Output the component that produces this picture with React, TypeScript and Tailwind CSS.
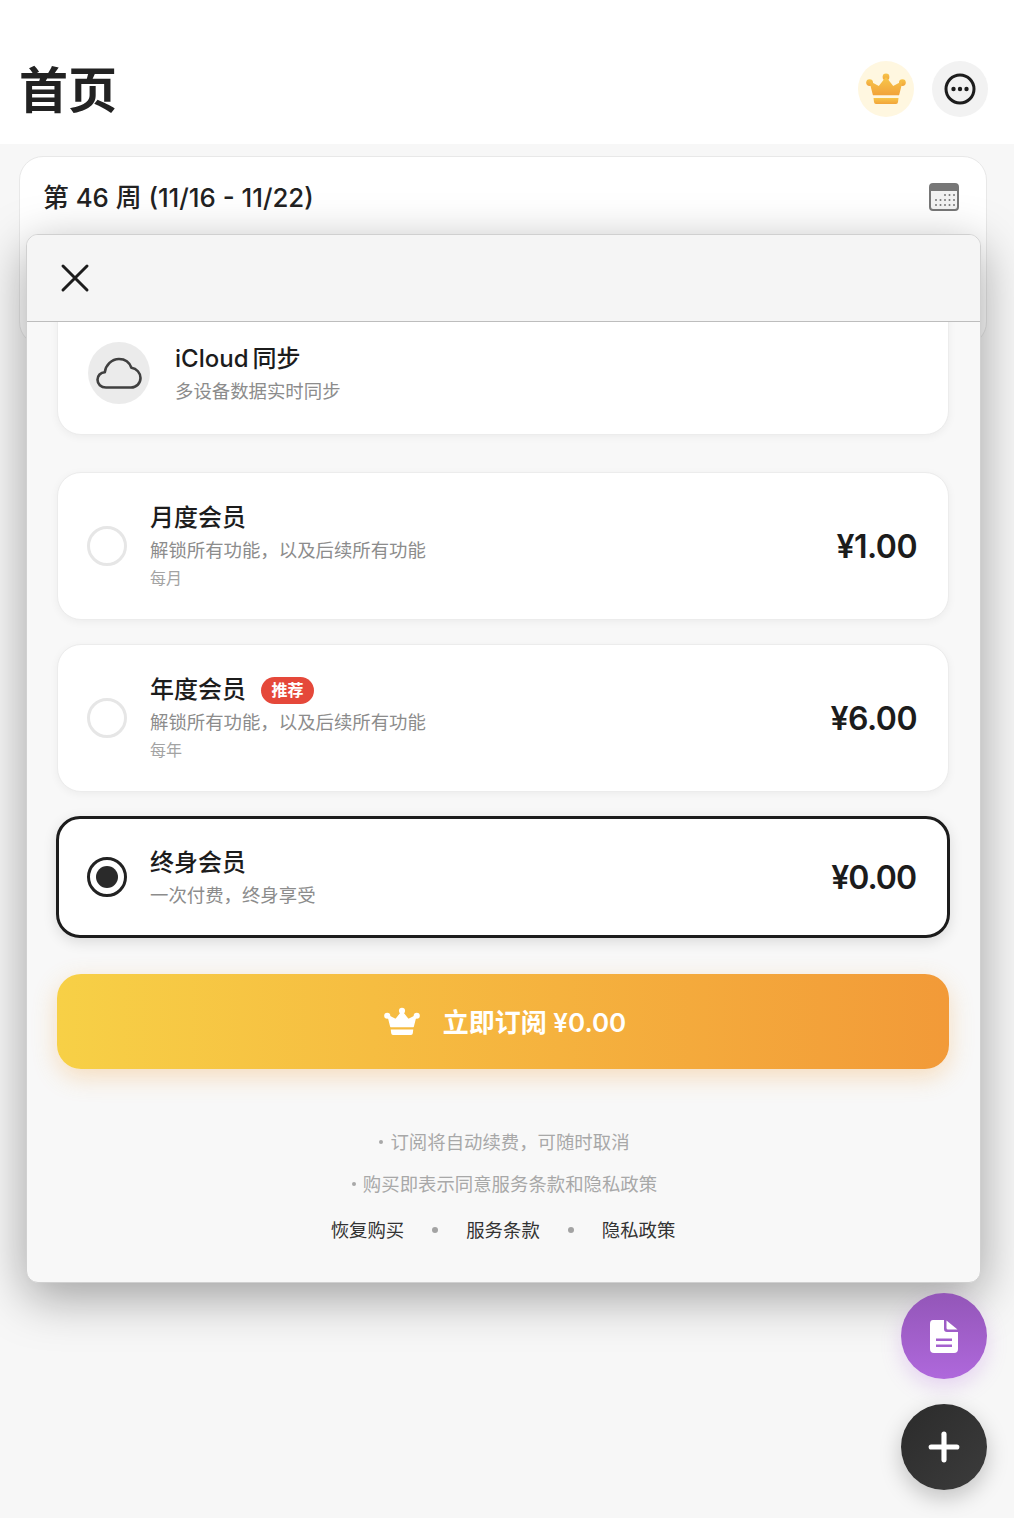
import { Plus } from 'lucide-react';

const font = { fontFamily: 'Inter, "Noto Sans CJK SC", sans-serif' };

function Crown({ className, id, from, to }: { className: string; id: string; from: string; to: string }) {
  return (
    <svg viewBox="0 0 40 32" className={className}>
      <defs>
        <linearGradient id={id} x1="0" y1="0" x2="0" y2="1">
          <stop offset="0" stopColor={from} />
          <stop offset="1" stopColor={to} />
        </linearGradient>
      </defs>
      <circle cx="20" cy="4" r="3.4" fill={`url(#${id})`} />
      <circle cx="3.6" cy="9.6" r="3.4" fill={`url(#${id})`} />
      <circle cx="36.4" cy="9.6" r="3.4" fill={`url(#${id})`} />
      <path d="M20 5 L27 14 L35.5 9.5 L32.5 21.5 H7.5 L4.5 9.5 L13 14 Z" fill={`url(#${id})`} stroke={`url(#${id})`} strokeWidth="1.5" strokeLinejoin="round" />
      <path d="M7.5 25 H32.5 L32 29 Q31.8 31 30 31 H10 Q8.2 31 8 29 Z" fill={`url(#${id})`} />
    </svg>
  );
}

function Radio({ checked }: { checked?: boolean }) {
  if (checked) {
    return (
      <div className="w-10 h-10 shrink-0 rounded-full border-[3px] border-[#222] flex items-center justify-center">
        <div className="w-[22px] h-[22px] rounded-full bg-[#2a2a2a]" />
      </div>
    );
  }
  return <div className="w-10 h-10 shrink-0 rounded-full border-[3px] border-[#e6e6e6]" />;
}

type Plan = { name: string; desc: string; period?: string; price: string; badge?: boolean; selected?: boolean };

const plans: Plan[] = [
  { name: '月度会员', desc: '解锁所有功能，以及后续所有功能', period: '每月', price: '¥1.00' },
  { name: '年度会员', desc: '解锁所有功能，以及后续所有功能', period: '每年', price: '¥6.00', badge: true },
  { name: '终身会员', desc: '一次付费，终身享受', price: '¥0.00', selected: true },
];

function PlanCard({ plan }: { plan: Plan }) {
  return (
    <div
      className={`flex items-center pr-[31px] rounded-[24px] bg-white ${
        plan.selected
          ? 'h-[122px] -mx-px pl-[28px] border-[3px] border-[#1c1c1c] shadow-[0_4px_14px_rgba(0,0,0,0.12)]'
          : 'h-[148px] pl-[29px] border border-[#ececec] shadow-[0_2px_8px_rgba(0,0,0,0.05)]'
      }`}
    >
      <Radio checked={plan.selected} />
      <div className="flex-1 ml-[23px]">
        <div className="flex items-center h-[32px]">
          <span className="text-[24px] font-medium text-[#1c1c1c] leading-[32px]">{plan.name}</span>
          {plan.badge && (
            <span className="ml-[15px] w-[53px] h-[27px] rounded-full bg-[#e5483a] text-white text-[16px] font-bold leading-[27px] text-center">
              推荐
            </span>
          )}
        </div>
        <div className="text-[18.4px] text-[#8c8c8c] leading-[26px] mt-[3px]">{plan.desc}</div>
        {plan.period && <div className="text-[16px] text-[#a3a3a3] leading-[24px] mt-[3px]">{plan.period}</div>}
      </div>
      <div
        className={`text-[32px] font-semibold text-[#1c1c1c] pt-[2px] ${
          plan.selected ? 'tracking-[-1px]' : 'tracking-[-0.5px]'
        }`}
      >
        {plan.price}
      </div>
    </div>
  );
}

function Note({ text }: { text: string }) {
  return (
    <div className="flex items-center justify-center pl-[3px]">
      <span className="w-[4px] h-[4px] rounded-full bg-[#a8a8a8] mr-[7px]" />
      <span>{text}</span>
    </div>
  );
}

export default function App() {
  return (
    <div style={font} className="relative w-[1014px] h-[1518px] bg-[#f7f7f7] overflow-hidden">
      <header className="h-[144px] bg-white flex items-start justify-between pl-[19px] pr-[26px] pt-[61px]">
        <h1 className="text-[49px] font-bold text-[#222] leading-[60px]">首页</h1>
        <div className="flex gap-[18px]">
          <button className="w-14 h-14 rounded-full bg-[#fff7e0] flex items-center justify-center">
            <Crown id="crown-top" from="#f7c54a" to="#f2a43a" className="w-[40px] h-[32px]" />
          </button>
          <button className="w-14 h-14 rounded-full bg-[#f2f2f2] flex items-center justify-center">
            <svg viewBox="0 0 32 32" className="w-8 h-8">
              <circle cx="16" cy="16" r="14" fill="none" stroke="#1c1c1c" strokeWidth="3" />
              <circle cx="9.5" cy="16" r="2.2" fill="#1c1c1c" />
              <circle cx="16" cy="16" r="2.2" fill="#1c1c1c" />
              <circle cx="22.5" cy="16" r="2.2" fill="#1c1c1c" />
            </svg>
          </button>
        </div>
      </header>

      <section className="ml-[19px] mr-[27px] mt-[12px] h-[190px] rounded-[24px] bg-white border border-[#e8e8e8] flex items-start justify-between pl-[23px] pr-[27px] pt-[23px]">
        <div className="text-[25.8px] font-medium text-[#222] leading-[36px]">第 46 周 (11/16 - 11/22)</div>
        <svg viewBox="0 0 30 28" className="w-[30px] h-[28px] mt-[3px]">
          <rect x="1" y="1" width="28" height="26" rx="3" fill="#f2f2f2" stroke="#777" strokeWidth="2" />
          <path d="M1 8V4a3 3 0 0 1 3-3h22a3 3 0 0 1 3 3v4Z" fill="#777" />
          {[12, 17, 22].map((y) =>
            [7, 11.5, 16, 20.5, 25].map((x) =>
              y === 12 && x < 12 ? null : <circle key={`${x}-${y}`} cx={x} cy={y} r="1" fill="#777" />
            )
          )}
        </svg>
      </section>

      {/* subscription sheet */}
      <div className="absolute left-[26px] top-[234px] w-[955px] h-[1049px] rounded-[12px] bg-[#f8f8f8] border border-[#d0d0d0] overflow-hidden shadow-[0_14px_50px_rgba(0,0,0,0.36)]">
        <div className="h-[87px] bg-[#f5f5f5] border-b border-[#bdbdbd] flex items-center pl-[33px] relative z-10">
          <svg viewBox="0 0 30 30" className="w-[30px] h-[30px]">
            <path d="M3 3 L27 27 M27 3 L3 27" stroke="#1c1c1c" strokeWidth="3" strokeLinecap="round" />
          </svg>
        </div>

        <div className="pl-[30px] pr-[31px]">
          <div className="-mt-[12px] h-[125px] rounded-b-[24px] bg-white border border-[#ececec] shadow-[0_2px_8px_rgba(0,0,0,0.05)] flex items-center pl-[30px]">
            <div className="w-[62px] h-[62px] rounded-full bg-[#ebebeb] flex items-center justify-center">
              <svg viewBox="0 0 46 32" className="w-[46px] h-[32px]">
                <path
                  d="M10 30.5 C4.8 30.5 1.5 27 1.5 22.8 C1.5 18.6 4.6 15.4 8.8 15.2 C9.8 8 15.6 2 23 2 C29 2 33.6 5.6 35.4 10.8 C40.6 11.6 44.5 15.8 44.5 21 C44.5 26.4 40.4 30.5 35 30.5 Z"
                  fill="none"
                  stroke="#404040"
                  strokeWidth="2.6"
                  strokeLinejoin="round"
                />
              </svg>
            </div>
            <div className="ml-[25px]">
              <div className="text-[24px] font-medium text-[#1c1c1c] leading-[32px] pt-[1px]">
                iCloud<span className="ml-[4px]">同步</span>
              </div>
              <div className="text-[18.4px] text-[#8c8c8c] leading-[26px] mt-[3px]">多设备数据实时同步</div>
            </div>
          </div>

          <div className="mt-[37px] flex flex-col gap-[24px]">
            {plans.map((plan) => (
              <PlanCard key={plan.name} plan={plan} />
            ))}
          </div>

          <button className="mt-[36px] w-full h-[95px] pl-[4px] rounded-[24px] bg-gradient-to-r from-[#f7d046] to-[#f29a38] shadow-[0_8px_24px_rgba(242,160,56,0.3)] flex items-center justify-center gap-[23px] text-white">
            <Crown id="crown-btn" from="#ffffff" to="#ffffff" className="w-[36px] h-[29px]" />
            <span className="text-[26px] font-semibold pt-[2px]">立即订阅 ¥0.00</span>
          </button>

          <div className="mt-[60px] text-center text-[18.4px] text-[#a8a8a8] leading-[26px]">
            <Note text="订阅将自动续费，可随时取消" />
            <div className="mt-[16px]">
              <Note text="购买即表示同意服务条款和隐私政策" />
            </div>
          </div>

          <div className="mt-[20px] flex items-center justify-center gap-[28px] text-[18.4px] text-[#333] leading-[26px]">
            <span>恢复购买</span>
            <span className="w-[6px] h-[6px] rounded-full bg-[#a3a3a3]" />
            <span>服务条款</span>
            <span className="w-[6px] h-[6px] rounded-full bg-[#a3a3a3]" />
            <span>隐私政策</span>
          </div>
        </div>
      </div>

      {/* floating actions */}
      <button className="absolute left-[901px] top-[1293px] w-[86px] h-[86px] rounded-full bg-gradient-to-b from-[#9356b8] to-[#af68dc] shadow-[0_8px_20px_rgba(175,104,220,0.25)] flex items-center justify-center">
        <svg viewBox="0 0 28 33" className="w-[28px] h-[33px]">
          <path
            d="M3 0 H14 V9 Q14 12 17 12 H28 V29 Q28 33 24 33 H4 Q0 33 0 29 V4 Q0 0 3 0 Z M6 18.5 V21 H22 V18.5 Z M6 24.5 V27 H22 V24.5 Z"
            fill="#fff"
            fillRule="evenodd"
          />
          <path d="M16.5 0.5 L27.5 9.5 H18 Q16.5 9.5 16.5 8 Z" fill="#fff" />
        </svg>
      </button>
      <button className="absolute left-[901px] top-[1404px] w-[86px] h-[86px] rounded-full bg-gradient-to-br from-[#2b2b2b] to-[#3c3c3c] shadow-[0_8px_22px_rgba(0,0,0,0.22)] flex items-center justify-center">
        <Plus className="w-[44px] h-[44px] text-white" strokeWidth={2.8} />
      </button>
    </div>
  );
}
